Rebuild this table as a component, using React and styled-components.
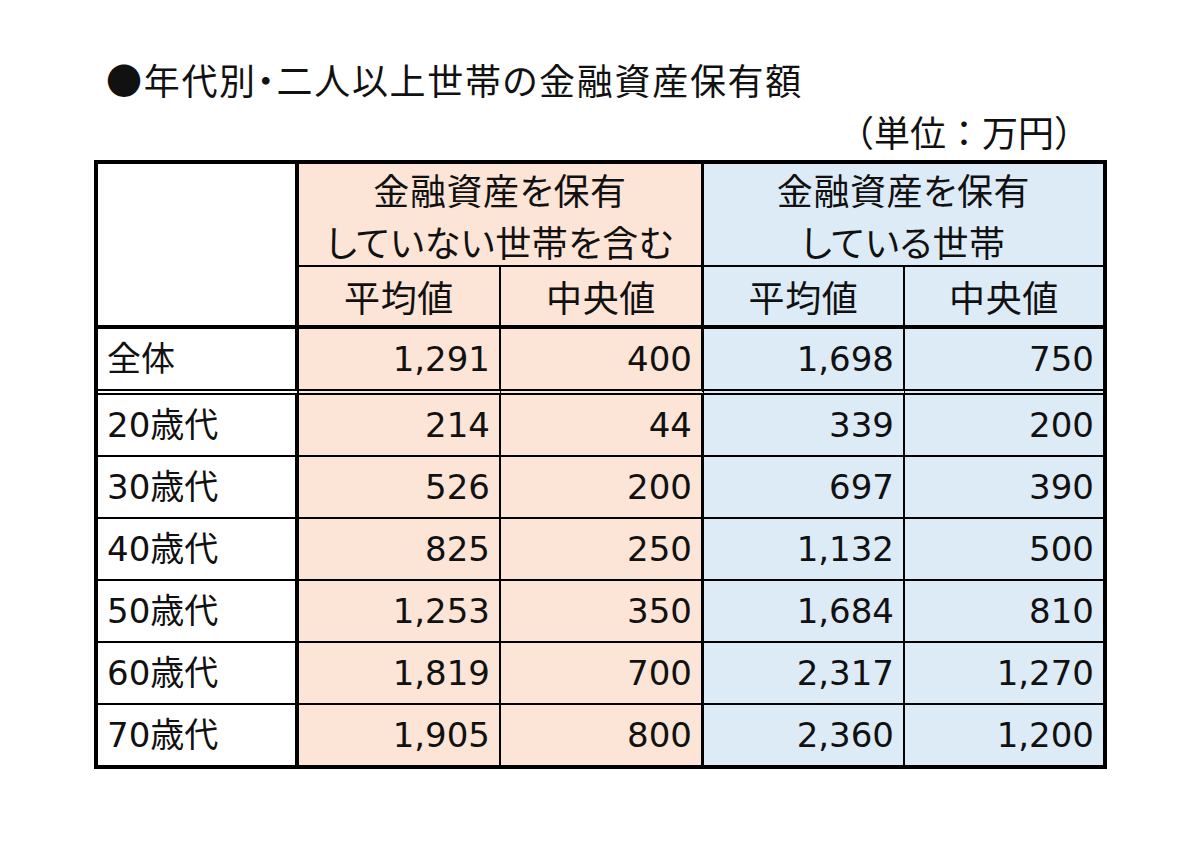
import React from "react";
import styled, { createGlobalStyle } from "styled-components";

const GlobalStyle = createGlobalStyle`
  html, body { margin: 0; padding: 0; background: #ffffff; }
  body { font-family: "Noto Sans CJK JP", sans-serif; color: #111; }
`;

const PINK = "#fce4d6";
const BLUE = "#ddebf7";

const Page = styled.div`
  width: 1200px;
  height: 847px;
  box-sizing: border-box;
  padding: 55px 0 0 94px;
`;

const Frame = styled.div`
  width: 1013px;
  display: flex;
  flex-direction: column;
`;

const Title = styled.h1`
  margin: 0 0 0 12px;
  font-family: "Noto Sans CJK JP", sans-serif;
  font-weight: 400;
  font-size: 36px;
  line-height: 48px;
  letter-spacing: 1.7px;
  font-feature-settings: "palt";
  color: #111;
`;

const Unit = styled.div`
  margin: 8px 17px 0 0;
  align-self: flex-end;
  font-family: "Noto Sans CJK JP", sans-serif;
  font-size: 36px;
  line-height: 40px;
`;

const Grid = styled.div`
  margin-top: 9px;
  box-sizing: border-box;
  width: 1013px;
  border: 4px solid #000;
  display: grid;
  grid-template-columns: 201px 202px 203px 201px 198px;
  grid-template-rows: 103px 62px 66px repeat(5, 62px) 60px;
`;

const Cell = styled.div`
  box-sizing: border-box;
  display: flex;
  align-items: center;
  justify-content: ${(p) =>
    p.$align === "right" ? "flex-end" : p.$align === "left" ? "flex-start" : "center"};
  padding: ${(p) => (p.$align === "right" ? "0 9px 0 0" : p.$align === "left" ? "0 0 0 9px" : "0")};
  background: ${(p) => p.$bg || "#fff"};
  border-right: ${(p) => (p.$r ? `${p.$r}px solid #000` : "none")};
  border-bottom: ${(p) => p.$b || "none"};
  grid-column: ${(p) => p.$col || "auto"};
  grid-row: ${(p) => p.$row || "auto"};
`;

const JaText = styled.span`
  font-family: "Noto Sans CJK JP", sans-serif;
  font-size: 36px;
  line-height: 52px;
  letter-spacing: 0.6px;
  font-feature-settings: "palt";
  text-align: center;
  white-space: pre-line;
`;

const Num = styled.span`
  font-family: "DejaVu Sans", "Noto Sans CJK JP", sans-serif;
  font-size: 34px;
  line-height: 52px;
`;

const Label = styled.span`
  font-family: "DejaVu Sans", "Noto Sans CJK JP", sans-serif;
  font-size: 34px;
  line-height: 52px;
  font-feature-settings: "palt";
`;

const rows = [
  ["全体", "1,291", "400", "1,698", "750"],
  ["20歳代", "214", "44", "339", "200"],
  ["30歳代", "526", "200", "697", "390"],
  ["40歳代", "825", "250", "1,132", "500"],
  ["50歳代", "1,253", "350", "1,684", "810"],
  ["60歳代", "1,819", "700", "2,317", "1,270"],
  ["70歳代", "1,905", "800", "2,360", "1,200"],
];

const THIN = "2px solid #000";
const THICK = "4px solid #000";
const DOUBLE = "6px double #000";

export default function App() {
  return (
    <>
      <GlobalStyle />
      <Page>
        <Frame>
          <Title>●年代別・二人以上世帯の金融資産保有額</Title>
          <Unit>（単位：万円）</Unit>
          <Grid>
            <Cell $col="1" $row="1 / span 2" $r={4} $b={THICK} />
            <Cell $col="2 / span 2" $row="1" $bg={PINK} $r={3} $b={THIN}>
              <JaText>{"金融資産を保有\nしていない世帯を含む"}</JaText>
            </Cell>
            <Cell $col="4 / span 2" $row="1" $bg={BLUE} $b={THIN}>
              <JaText>{"金融資産を保有\nしている世帯"}</JaText>
            </Cell>
            <Cell $bg={PINK} $r={2} $b={THICK}>
              <JaText>平均値</JaText>
            </Cell>
            <Cell $bg={PINK} $r={3} $b={THICK}>
              <JaText>中央値</JaText>
            </Cell>
            <Cell $bg={BLUE} $r={2} $b={THICK}>
              <JaText>平均値</JaText>
            </Cell>
            <Cell $bg={BLUE} $b={THICK}>
              <JaText>中央値</JaText>
            </Cell>
            {rows.map((r, i) => {
              const b = i === 0 ? DOUBLE : i === rows.length - 1 ? "none" : THIN;
              return (
                <React.Fragment key={r[0]}>
                  <Cell $align="left" $r={4} $b={b}>
                    <Label>{r[0]}</Label>
                  </Cell>
                  <Cell $align="right" $bg={PINK} $r={2} $b={b}>
                    <Num>{r[1]}</Num>
                  </Cell>
                  <Cell $align="right" $bg={PINK} $r={3} $b={b}>
                    <Num>{r[2]}</Num>
                  </Cell>
                  <Cell $align="right" $bg={BLUE} $r={2} $b={b}>
                    <Num>{r[3]}</Num>
                  </Cell>
                  <Cell $align="right" $bg={BLUE} $b={b}>
                    <Num>{r[4]}</Num>
                  </Cell>
                </React.Fragment>
              );
            })}
          </Grid>
        </Frame>
      </Page>
    </>
  );
}
